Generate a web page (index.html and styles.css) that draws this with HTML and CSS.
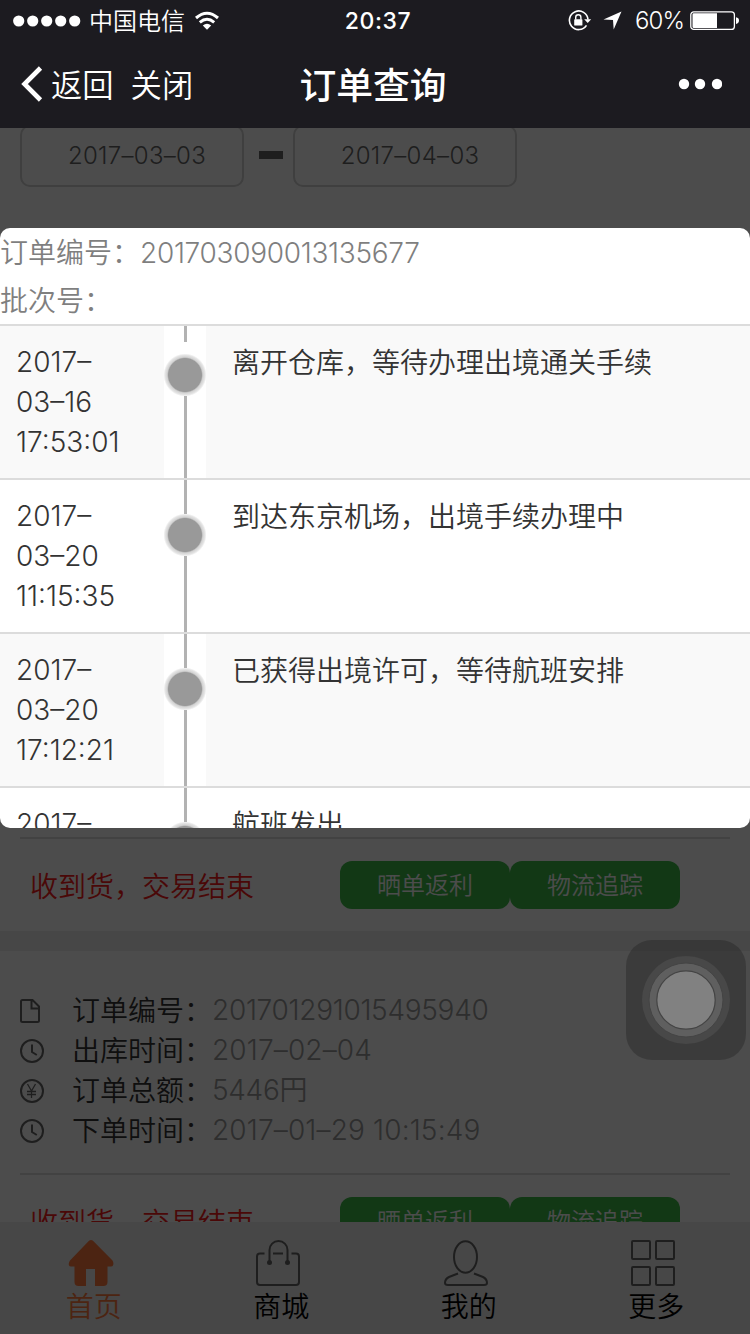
FILE: index.html
```html
<!DOCTYPE html>
<html lang="zh-CN">
<head>
<meta charset="utf-8">
<title>订单查询</title>
<link rel="stylesheet" href="styles.css">
</head>
<body>
<div class="screen">
  <header class="header">
    <div class="status">
      <div class="status-left">
        <svg class="signal" width="68" height="12" viewBox="0 0 68 12"><g fill="#fff"><circle cx="5.7" cy="6" r="5.6"/><circle cx="19.7" cy="6" r="5.6"/><circle cx="33.7" cy="6" r="5.6"/><circle cx="47.7" cy="6" r="5.6"/><circle cx="61.7" cy="6" r="5.6"/></g></svg>
        <span class="carrier">中国电信</span>
        <svg class="wifi" width="26" height="20" viewBox="0 0 26 20"><g fill="none" stroke="#fff" stroke-width="3"><path d="M2 7Q13-2.600 24 7"/><path d="M5.800 11.300Q13 5.200 20.200 11.300"/></g><path fill="#fff" d="M13 18.800l-4.200-4.300q4.200-3.400 8.400 0z"/></svg>
      </div>
      <span class="clock">20:37</span>
      <div class="status-right">
        <svg width="24" height="22" viewBox="0 0 24 22"><path d="M18.500 15.400A9.300 9.300 0 1 1 20 9.500" fill="none" stroke="#fff" stroke-width="1.600"/><path d="M16.200 9.200h7l-3.500 3.900z" fill="#fff"/><rect x="6.200" y="9.300" width="8.200" height="6.200" rx=".6" fill="#fff"/><path d="M7.700 9.500V7.400a2.600 2.600 0 0 1 5.200 0v2.100" fill="none" stroke="#fff" stroke-width="1.400"/></svg>
        <svg class="arrow" width="19" height="19" viewBox="0 0 19 19"><path d="M18.500.5L10.700 18.500 10 9 .5 8.600z" fill="#fff"/></svg>
        <span class="percent">60%</span>
        <svg class="battery" width="50" height="20" viewBox="0 0 50 20"><rect x=".8" y=".8" width="43.600" height="17.600" rx="3" fill="none" stroke="#fff" stroke-width="1.300"/><path d="M2.500 3.500a1.200 1.200 0 0 1 1.200-1.200H27v14.600H3.700a1.200 1.200 0 0 1-1.200-1.200zM46 6.200q3 .5 3 3.400t-3 3.400z" fill="#fff"/></svg>
      </div>
    </div>
    <nav class="nav">
      <div class="nav-left">
        <svg width="23" height="36" viewBox="0 0 23 36"><path d="M20.500 2L4.500 18l16 16" fill="none" stroke="#fff" stroke-width="4.600"/></svg>
        <span class="back">返回</span>
        <span class="close">关闭</span>
      </div>
      <h1 class="title">订单查询</h1>
      <svg class="more" width="44" height="12" viewBox="0 0 44 12"><g fill="#fff"><circle cx="6" cy="6" r="5.200"/><circle cx="22" cy="6" r="5.200"/><circle cx="39" cy="6" r="5.200"/></g></svg>
    </nav>
  </header>

  <main class="page">
    <div class="dates">
      <div class="date num">2017–03–03</div>
      <span class="dash"></span>
      <div class="date num">2017–04–03</div>
    </div>
    <section class="order order-first">
      <div class="actions">
        <span class="state">收到货，交易结束</span>
        <span class="btn">晒单返利</span><span class="btn">物流追踪</span>
      </div>
    </section>
    <section class="order">
      <ul class="info">
        <li><svg width="24" height="26" viewBox="0 0 24 26"><path d="M2.500 2h10l6.500 6.500v14a1.500 1.500 0 0 1-1.500 1.500h-15A1.500 1.500 0 0 1 1 22.500v-19A1.500 1.500 0 0 1 2.500 2zM11.500 2v8.500H19" fill="none" stroke="#666" stroke-width="2"/></svg><span class="label">订单编号：</span><span class="value num id">201701291015495940</span></li>
        <li><svg width="24" height="26" viewBox="0 0 24 26"><circle cx="12" cy="13" r="11" fill="none" stroke="#666" stroke-width="2"/><path d="M12 6.500V14l4.800 3" fill="none" stroke="#666" stroke-width="2"/></svg><span class="label">出库时间：</span><span class="value num stamp">2017–02–04</span></li>
        <li><svg width="24" height="26" viewBox="0 0 24 26"><g fill="none" stroke="#666" stroke-width="1.300"><circle cx="12" cy="13" r="11" stroke-width="2"/><path d="M7.500 6l4 7 4-7M11.500 13v7M7 13.500h9M7 16.500h9"/></g></svg><span class="label">订单总额：</span><span class="value num">5446円</span></li>
        <li><svg width="24" height="26" viewBox="0 0 24 26"><circle cx="12" cy="13" r="11" fill="none" stroke="#666" stroke-width="2"/><path d="M12 6.500V14l4.800 3" fill="none" stroke="#666" stroke-width="2"/></svg><span class="label">下单时间：</span><span class="value num stamp">2017–01–29 10:15:49</span></li>
      </ul>
      <div class="actions">
        <span class="state">收到货，交易结束</span>
        <span class="btn">晒单返利</span><span class="btn">物流追踪</span>
      </div>
    </section>
  </main>

  <footer class="tabs">
    <div class="tab tab-on">
      <svg width="46" height="46" viewBox="0 0 46 46"><path d="M21 .8q2-1.600 4 0L44.500 20.500Q46 23 45 25.500q-.5 1-2 1H39.500V42q0 4-4 4H27V29h-9v17h-7.500q-4 0-4-4V26.500H3q-1.500 0-2-1-.8-2.500 1-5z" fill="#fd7b3f"/></svg>
      <span>首页</span>
    </div>
    <div class="tab">
      <svg width="46" height="46" viewBox="0 0 46 46"><g fill="none" stroke="#666" stroke-width="2"><path d="M9.500 13.500H5q-3 0-3 3V42q0 3 3 3h36q3 0 3-3V16.500q0-3-3-3h-4.500M18 13.500h10"/><path d="M14.500 22V10a9 9 0 0 1 18 0v12"/></g><g fill="#666"><circle cx="14.500" cy="22.500" r="2.500"/><circle cx="32.500" cy="22.500" r="2.500"/></g></svg>
      <span>商城</span>
    </div>
    <div class="tab">
      <svg width="46" height="46" viewBox="0 0 46 46"><g fill="none" stroke="#666" stroke-width="2"><ellipse cx="22.500" cy="17" rx="11.500" ry="15.700"/><path d="M15 33.500l-9 3.500q-4 2-4 6 0 2 3 2h36q3 0 3-2 0-4-4-6l-9-3.500"/></g></svg>
      <span>我的</span>
    </div>
    <div class="tab">
      <svg width="46" height="46" viewBox="0 0 46 46"><g fill="none" stroke="#666" stroke-width="2"><rect x="2" y="1" width="18" height="18" rx="1"/><rect x="26" y="1" width="18" height="18" rx="1"/><rect x="2" y="27" width="18" height="18" rx="1"/><rect x="26" y="27" width="18" height="18" rx="1"/></g></svg>
      <span>更多</span>
    </div>
  </footer>

  <div class="mask">
    <div class="dialog">
      <p class="meta">订单编号：<span class="num id">201703090013135677</span></p>
      <p class="meta">批次号：</p>
      <div class="step step-first">
        <div class="time num">2017–<br>03–16<br>17:53:01</div>
        <div class="track"><i class="dot"></i></div>
        <div class="desc">离开仓库，等待办理出境通关手续</div>
      </div>
      <div class="step">
        <div class="time num">2017–<br>03–20<br>11:15:35</div>
        <div class="track"><i class="dot"></i></div>
        <div class="desc">到达东京机场，出境手续办理中</div>
      </div>
      <div class="step">
        <div class="time num">2017–<br>03–20<br>17:12:21</div>
        <div class="track"><i class="dot"></i></div>
        <div class="desc">已获得出境许可，等待航班安排</div>
      </div>
      <div class="step">
        <div class="time num">2017–</div>
        <div class="track"><i class="dot"></i></div>
        <div class="desc">航班发出</div>
      </div>
    </div>
  </div>

  <div class="assist">
    <svg width="120" height="120" viewBox="0 0 120 120"><circle cx="60" cy="60" r="44" fill="#484848"/><circle cx="60" cy="60" r="37" fill="#5f5f5f" stroke="#444" stroke-width="1"/><circle cx="60" cy="60" r="29.200" fill="#818181" stroke="#444" stroke-width="1.200"/></svg>
  </div>
</div>
</body>
</html>
```

FILE: styles.css
```css
* { box-sizing: border-box; }
body {
  margin: 0;
  font-family: "Noto Sans CJK SC", sans-serif;
  font-weight: 350;
  font-size: 28px;
}
svg { display: block; flex: none; }
.screen {
  position: relative;
  width: 750px;
  height: 1334px;
  overflow: hidden;
  display: flex;
  flex-direction: column;
  background: #fff;
}
.num { font-family: Inter, "Noto Sans CJK SC", sans-serif; font-weight: 330; letter-spacing: -.3px; }

.header { height: 128px; flex: none; background: #1c1b20; color: #fff; }
.status, .nav { display: grid; grid-template-columns: 1fr auto 1fr; align-items: center; }
.status { height: 41px; padding: 0 10px 0 13px; font-size: 24px; line-height: 40px; }
.status-left, .status-right, .nav-left { display: flex; align-items: center; }
.carrier { margin: 0 9px 1px 8px; }
.clock { font-family: Inter, sans-serif; font-weight: 500; font-size: 23px; letter-spacing: .6px; padding-left: 3px; }
.status-right { justify-content: flex-end; }
.arrow { margin: 0 13px 0 11px; }
.percent { font-family: Inter, sans-serif; font-weight: 350; font-size: 24px; letter-spacing: -.9px; margin-right: 6px; }
.nav { height: 87px; padding: 0 28px 2px 20px; }
.nav-left { font-size: 31.300px; line-height: 80px; }
.back { margin: 0 17px 0 8px; }
.title { margin: 0; padding-left: 4px; font-size: 36.800px; font-weight: 500; line-height: 85px; }
.more { justify-self: end; }

.page { height: 1094px; flex: none; overflow: hidden; color: #333; }
.dates { display: flex; align-items: center; margin: -3px 20px 0; }
.date {
  width: 224px;
  height: 62px;
  border: 2px solid #d2d2d2;
  border-radius: 10px;
  padding-left: 10px;
  text-align: center;
  font-size: 24px;
  line-height: 57px;
  letter-spacing: .3px;
  color: #666;
}
.dash { width: 24px; height: 8px; margin: 0 10px 2px 15px; background: #666; }
.order-first { padding-top: 650px; border-bottom: 20px solid #ededed; }
.info { list-style: none; margin: 0; padding: 39px 20px 23px; }
.info li { display: flex; align-items: center; height: 40px; line-height: 38px; }
.info svg { margin-top: 1px; }
.label { margin: 0 0 2px 28px; width: 140px; color: #333; }
.value { color: #999; }
.stamp { letter-spacing: .15px; }
.actions {
  display: flex;
  align-items: center;
  height: 94px;
  margin: 0 20px;
  padding-left: 10px;
  border-top: 2px solid #dedede;
}
.state { width: 310px; margin-bottom: 1px; color: #f91b1b; }
.btn {
  width: 170px;
  height: 48px;
  border-radius: 12px;
  background: #3cbb49;
  color: #fff;
  font-size: 24px;
  line-height: 46px;
  text-align: center;
}
.tabs { flex: 1; display: grid; grid-template-columns: repeat(4, 1fr); background: #ededed; color: #000; }
.tab { display: flex; flex-direction: column; align-items: center; padding-top: 18px; }
.tab svg { margin-right: 6px; }
.tab span { line-height: 38px; }
.tab-on { color: #fd7b3f; }

.mask { position: absolute; inset: 128px 0 0; background: rgba(0, 0, 0, .7); padding-top: 100px; }
.dialog { height: 600px; overflow: hidden; border-radius: 10px; background: #fff; }
.meta { margin: 0; height: 48px; line-height: 46px; color: #7f7f7f; }
.step {
  display: grid;
  grid-template-columns: 164px 42px 1fr;
  height: 154px;
  border-top: 2px solid #dcdcdc;
  line-height: 40px;
  color: #333;
}
.step:nth-child(odd) { background: #f9f9f9; }
.time { padding: 16px; letter-spacing: 0; }
.desc { padding: 15px 26px; }
.track {
  display: flex;
  flex-direction: column;
  align-items: center;
  background: #fff;
}
.track::before, .track::after { content: ""; width: 3px; background: #b2b2b2; }
.track::before { height: 34px; }
.track::after { flex: 1; }
.dot {
  width: 42px;
  height: 42px;
  background: radial-gradient(circle, #999 16.500px, #d2d2d2 17.800px, #e6e6e6 20px, rgba(255, 255, 255, 0) 21.500px);
}
.step-first .track::before { height: 16px; margin-bottom: 12px; }

.assist {
  position: absolute;
  left: 626px;
  top: 940px;
  width: 120px;
  height: 120px;
  border-radius: 26px;
  background: rgba(0, 0, 0, .21);
}
```
